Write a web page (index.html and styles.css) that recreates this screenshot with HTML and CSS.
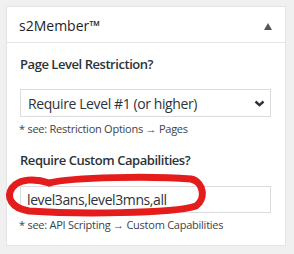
FILE: index.html
```html
<!DOCTYPE html>
<html lang="en">

<head>
    <meta charset="UTF-8">
    <meta name="viewport" content="width=device-width, initial-scale=1.0">
    <title>s2Member</title>

    <link rel="stylesheet" href="styles.css">
</head>

<body>
    <div class="postbox">
        <div class="postbox-header">
            <h2>s2Member™</h2>
            <svg class="toggle" width="8" height="7" viewBox="0 0 8 7">
                <polygon points="4,0 8,7 0,7" fill="#50575e" />
            </svg>
        </div>

        <div class="inside">
            <label class="field-label" for="level">Page Level Restriction?</label>
            <div class="select-box">
                <span id="level">Require Level #1 (or higher)</span>
                <svg class="chevron" width="11" height="7" viewBox="0 0 11 7">
                    <polyline points="1.5,1.5 5.5,5.2 9.5,1.5" fill="none" stroke="#2c3338" stroke-width="2.4" />
                </svg>
            </div>
            <p class="note">* see: Restriction Options → Pages</p>

            <label class="field-label second" for="caps">Require Custom Capabilities?</label>
            <input type="text" id="caps" class="text-box" value="level3ans,level3mns,all">
            <p class="note">* see: API Scripting → Custom Capabilities</p>
        </div>

        <!-- hand drawn marker round the caps field -->
        <svg class="scribble" width="210" height="50" viewBox="0 0 210 50">
            <path d="M 10 14 C 16 6, 32 5, 46 10 C 70 4, 150 3, 188 6 C 201 9, 203 26, 193 33 C 170 41, 70 41, 26 38 C 8 35, 3 24, 9 15"
                fill="none" stroke="#e51c1c" stroke-width="7" stroke-linecap="round" />
        </svg>
    </div>
</body>

</html>
```

FILE: styles.css
```css
body {
    margin: 0;
    padding: 6px;
    background-color: #f0f0f1;
    font-family: "Open Sans", "Noto Sans", sans-serif;
    color: #1d2327;
}

.postbox {
    position: relative;
    width: 278px;
    height: 238px;
    background-color: #fff;
    border: 1px solid #e2e4e7;
}

.postbox-header {
    display: flex;
    align-items: center;
    justify-content: space-between;
    height: 35px;
    padding: 0 13px 0 12px;
    border-bottom: 1px solid #e2e4e7;
}

.postbox-header h2 {
    margin: 0;
    font-size: 14px;
    font-weight: 400;
    padding-top: 2px;
}

.toggle {
    display: block;
    margin-top: 4px;
}

.inside {
    padding: 12px 14px 0 13px;
}

.field-label {
    display: block;
    font-size: 13px;
    font-weight: 600;
    letter-spacing: -0.45px;
    line-height: 18px;
    color: #2c3338;
    margin-bottom: 16px;
}

.field-label.second {
    margin-top: 15px;
    margin-bottom: 17px;
}

.select-box {
    display: flex;
    align-items: center;
    justify-content: space-between;
    height: 26px;
    padding: 0 5px 0 7px;
    border: 1px solid #dcdcde;
    font-size: 14px;
    letter-spacing: -0.4px;
    color: #2c3338;
}

.text-box {
    display: block;
    box-sizing: border-box;
    width: 251px;
    height: 27px;
    margin: 0;
    padding: 0 6px;
    border: 1px solid #dcdcde;
    font-family: "Open Sans", "Noto Sans", sans-serif;
    font-size: 14px;
    letter-spacing: -0.4px;
    color: #2c3338;
}

.note {
    margin: 4px 0 0 -1px;
    font-size: 11px;
    letter-spacing: -0.25px;
    line-height: 15px;
    color: #3c434a;
}

.scribble {
    position: absolute;
    left: -4px;
    top: 166px;
}
```
